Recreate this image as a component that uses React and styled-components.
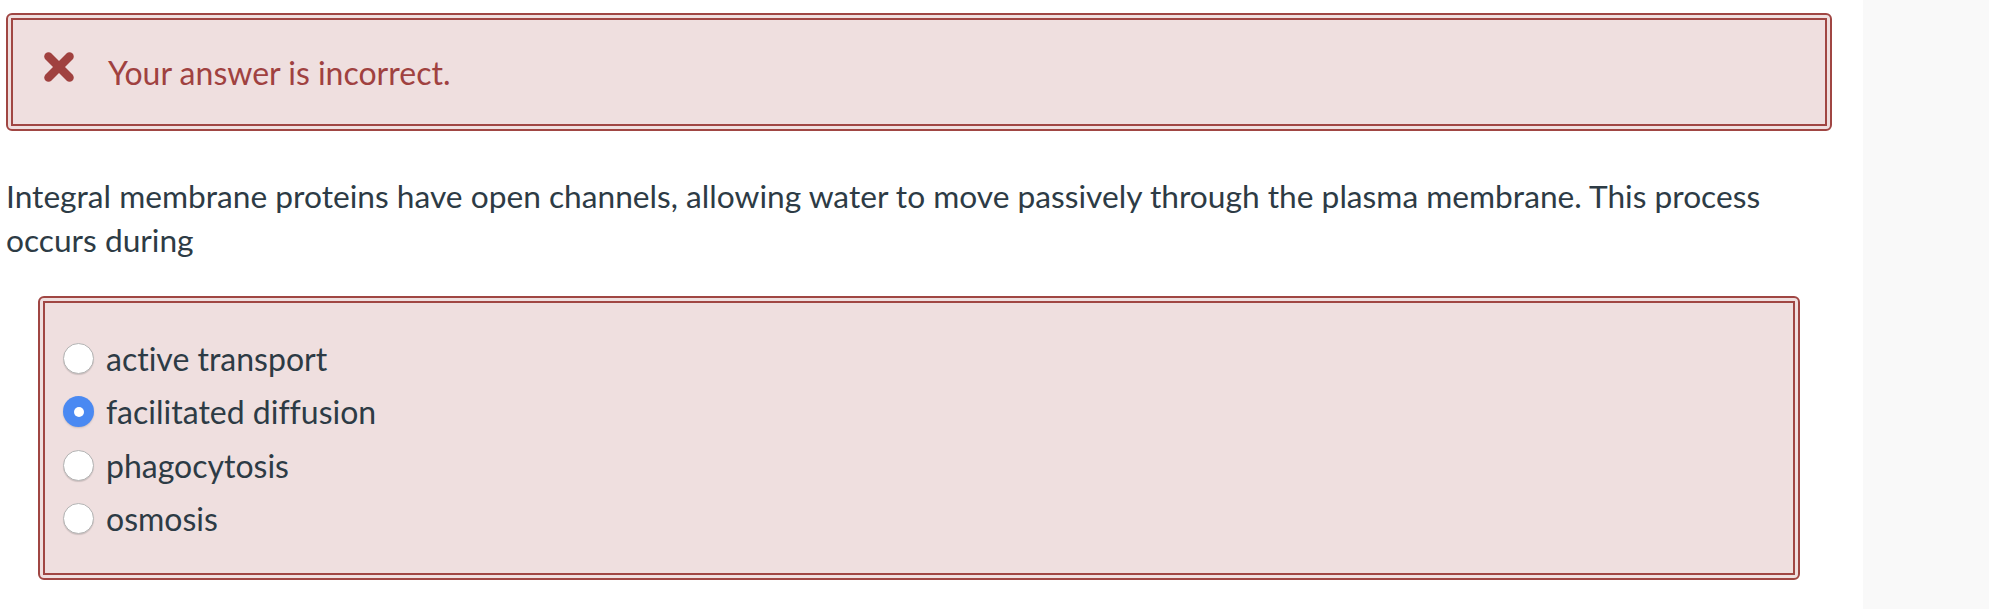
import React from "react";
import styled, { createGlobalStyle } from "styled-components";

const GlobalStyle = createGlobalStyle`
  html, body {
    margin: 0;
    padding: 0;
    background: #ffffff;
  }
  body {
    font-family: Lato, "Open Sans", "Liberation Sans", sans-serif;
    color: #2d3b45;
    font-variant-ligatures: no-common-ligatures;
    font-feature-settings: "liga" 0;
  }
`;

const Page = styled.div`
  display: flex;
  min-height: 609px;
`;

const Main = styled.main`
  flex: 1;
  min-width: 0;
  padding: 13px 31px 0 6px;
`;

const Side = styled.aside`
  width: 126px;
  flex: none;
  background: #f9f9f9;
`;

const Frame = styled.div`
  border: 2px solid #a04643;
  border-radius: 6px;
  padding: 3px;
  background: #efdfdf;
  margin: ${(p) => p.$margin || "0"};
`;

const FrameInner = styled.div`
  border: 2px solid #a04643;
  background: #efdfdf;
  padding: ${(p) => p.$padding || "0"};
`;

const AlertRow = styled.div`
  display: flex;
  align-items: center;
  height: 104px;
  gap: 34px;
`;

const AlertIcon = styled.svg`
  width: 30px;
  height: 30px;
  flex: none;
  margin-top: -10px;
`;

const AlertText = styled.span`
  font-size: 32px;
  color: #a0413f;
`;

const Question = styled.p`
  font-size: 31.7px;
  line-height: 43.5px;
  margin: 44px 0 34px 0;
`;

const OptionList = styled.div`
  display: flex;
  flex-direction: column;
`;

const Option = styled.label`
  display: flex;
  align-items: center;
  height: 53.3px;
  gap: 12px;
  font-size: 32px;
  color: #2d3b45;
`;

const Radio = styled.span`
  width: 31px;
  height: 31px;
  border-radius: 50%;
  box-sizing: border-box;
  flex: none;
  display: flex;
  align-items: center;
  justify-content: center;
  background: ${(p) => (p.$checked ? "#4a89f2" : "#ffffff")};
  border: ${(p) => (p.$checked ? "none" : "1px solid #b4b4b4")};
  box-shadow: ${(p) => (p.$checked ? "0 1px 2px rgba(0,0,0,0.15)" : "0 1px 1px rgba(0,0,0,0.14)")};
`;

const Dot = styled.span`
  width: 10px;
  height: 10px;
  border-radius: 50%;
  background: #ffffff;
`;

const options = [
  { label: "active transport", checked: false },
  { label: "facilitated diffusion", checked: true },
  { label: "phagocytosis", checked: false },
  { label: "osmosis", checked: false },
];

export default function App() {
  return (
    <>
      <GlobalStyle />
      <Page>
        <Main>
          <Frame>
            <FrameInner $padding="0 0 0 31px">
              <AlertRow>
                <AlertIcon viewBox="0 0 30 30" aria-hidden="true">
                  <g stroke="#a0413f" strokeWidth="8.5" strokeLinecap="round">
                    <line x1="4.5" y1="4.5" x2="25.5" y2="25.5" />
                    <line x1="25.5" y1="4.5" x2="4.5" y2="25.5" />
                  </g>
                </AlertIcon>
                <AlertText>Your answer is incorrect.</AlertText>
              </AlertRow>
            </FrameInner>
          </Frame>
          <Question>
            Integral membrane proteins have open channels, allowing water to move passively through the plasma membrane. This process occurs during
          </Question>
          <Frame $margin="0 32px">
            <FrameInner $padding="29px 18px 28px">
              <OptionList>
                {options.map((o) => (
                  <Option key={o.label}>
                    <Radio $checked={o.checked}>{o.checked && <Dot />}</Radio>
                    {o.label}
                  </Option>
                ))}
              </OptionList>
            </FrameInner>
          </Frame>
        </Main>
        <Side />
      </Page>
    </>
  );
}
